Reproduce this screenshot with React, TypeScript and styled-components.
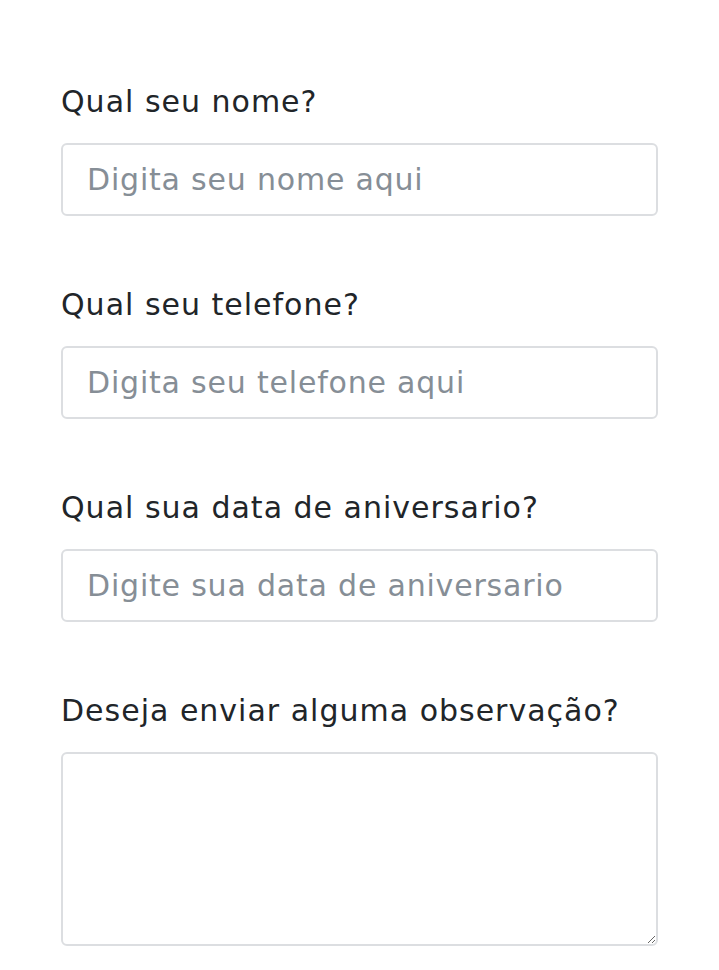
import React from "react";
import styled, { createGlobalStyle } from "styled-components";

const GlobalStyle = createGlobalStyle`
  html, body { margin: 0; padding: 0; background: #ffffff; }
  * { box-sizing: border-box; }
`;

const Form = styled.form`
  display: flex;
  flex-direction: column;
  gap: 71px;
  padding: 84px 61px 0 61px;
  font-family: "DejaVu Sans", sans-serif;
`;

const Field = styled.div`
  display: flex;
  flex-direction: column;
  gap: 23px;
`;

const Label = styled.label`
  font-size: 30px;
  line-height: 36px;
  letter-spacing: 1px;
  color: #212529;
  font-weight: 400;
`;

const Input = styled.input`
  width: 100%;
  height: 73px;
  padding: 0 24px;
  border: 2px solid #dcdee1;
  border-radius: 6px;
  font-family: inherit;
  font-size: 30px;
  letter-spacing: 0.8px;
  color: #495057;
  outline: none;
  &::placeholder { color: #868e96; }
`;

const TextArea = styled.textarea`
  display: block;
  width: 100%;
  height: 194px;
  padding: 12px 24px;
  border: 2px solid #dcdee1;
  border-radius: 6px;
  font-family: inherit;
  font-size: 30px;
  outline: none;
`;

export default function App() {
  return (
    <>
      <GlobalStyle />
      <Form>
        <Field>
          <Label>Qual seu nome?</Label>
          <Input placeholder="Digita seu nome aqui" />
        </Field>
        <Field>
          <Label>Qual seu telefone?</Label>
          <Input placeholder="Digita seu telefone aqui" />
        </Field>
        <Field>
          <Label>Qual sua data de aniversario?</Label>
          <Input placeholder="Digite sua data de aniversario" />
        </Field>
        <Field>
          <Label>Deseja enviar alguma observação?</Label>
          <TextArea />
        </Field>
      </Form>
    </>
  );
}
